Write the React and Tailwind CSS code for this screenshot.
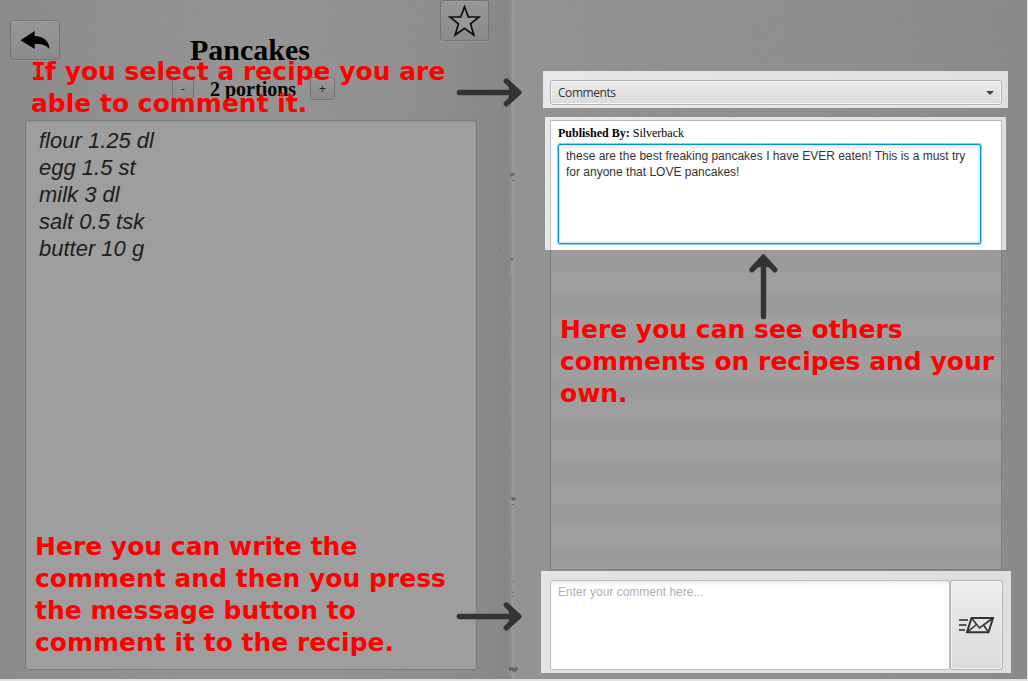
const ingredients = ['flour 1.25 dl', 'egg 1.5 st', 'milk 3 dl', 'salt 0.5 tsk', 'butter 10 g'];

const buttonLook = 'flex items-center justify-center rounded-[3px] border border-[#747474] bg-gradient-to-b from-[#979797] to-[#8b8b8b] shadow-[inset_0_1px_0_#a0a0a0,0_1px_0_#979797]';

const emptyRows = Array.from({ length: 14 }, (_, i) => i);

function Arrow({ className }) {
  return (
    <svg className={className} width="68" height="30" viewBox="0 0 68 30" fill="none">
      <path d="M3.4 15.500H60" stroke="#333" strokeWidth="5.4" strokeLinecap="round" />
      <path d="M50.300 4 62.800 15.400 50.300 26.800" stroke="#333" strokeWidth="5.400" strokeLinecap="round" strokeLinejoin="round" />
      <path d="M52 8.500 66 15.400 52 22.300 54 15.400Z" fill="#333" />
    </svg>
  );
}

function Note({ className, lines, initial }) {
  return (
    <div className={`absolute whitespace-nowrap font-['DejaVu_Sans',sans-serif] text-[25px] font-bold leading-[32px] text-[#ff0000] ${className}`}>
      {lines.map((line, i) => (
        <div key={line} className="h-8">
          {i === 0 && initial && <span className="font-['DejaVu_Sans_Mono',monospace] tracking-[-1px]">{initial}</span>}
          {line}
        </div>
      ))}
    </div>
  );
}

function PaperGrain() {
  return (
    <svg className="absolute inset-0 opacity-[0.04]" width="1027" height="679">
      <filter id="grain">
        <feTurbulence type="fractalNoise" baseFrequency="0.18" numOctaves="3" />
        <feColorMatrix type="saturate" values="0" />
      </filter>
      <rect width="1027" height="679" filter="url(#grain)" />
    </svg>
  );
}

function Spine() {
  return (
    <svg className="absolute left-[494px] top-0" width="40" height="679" viewBox="494 0 40 679" fill="none">
      <path d="M512.5 0V679" stroke="#a0a0a0" strokeWidth="2" opacity=".65" />
      <path d="M510.5 0V679" stroke="#7f7f7f" opacity=".4" />
      <g fill="#555" opacity=".75">
        <path d="M510 175l2-2 3 .5-1 2-3 1zM512 180h2v1h-2z" />
        <path d="M511 258h2v2h-2zM499.500 248h1v1h-1z" />
        <path d="M510.500 498l2-1 3 1v2l-3 1-1-2zM512 504h2v1h-2z" />
        <path d="M512 581h1v1h-1zM511.500 591l2 1-1 2zM512 596h1v1h-1z" />
        <path d="M509 668l3-1 1 1 4-1 1 2-2 3-2-1-1 2-1-3-3 1z" />
      </g>
      <path d="M508.500 177q1 6 6 6M508.500 500q2 4 5 3M511 265l1 4-2 5M508 670q1 5 5 5" stroke="#adadad" opacity=".6" />
    </svg>
  );
}

function RecipePage() {
  return (
    <section className="flex w-[514px] flex-col">
      <div className="flex h-[60px] justify-between pl-[10px] pr-[25px]">
        <button className={`mt-5 h-10 w-[50px] ${buttonLook}`}>
          <svg width="30" height="20" viewBox="0 0 30 20">
            <path d="M0.500 10.300 14.700 1V6C23 6 29.200 11 29.600 19 25.500 14.500 21 13.500 14.700 14V19Z" fill="#000" />
          </svg>
        </button>
        <h1 className="mt-[33px] w-[120px] font-['Liberation_Serif',serif] text-[30px] font-bold leading-[34px] text-black">Pancakes</h1>
        <button className={`h-[41px] w-[49px] ${buttonLook}`}>
          <svg width="33" height="32" viewBox="0 0 33 32">
            <path d="M16.500 1.800 20.300 12H31L22.500 18.800 25.800 30 16.500 23.300 7.200 30 10.500 18.800 2 12H12.700Z" fill="#999" stroke="#0c0c0c" strokeWidth="1.700" />
          </svg>
        </button>
      </div>
      <div className="flex h-[60px] pl-[172px] pt-[17px] font-['Liberation_Serif',serif]">
        <button className={`mt-px h-[22px] w-[22px] font-['Open_Sans',sans-serif] text-[12px] text-[#222] ${buttonLook}`}>-</button>
        <span className="ml-4 w-[100px] whitespace-nowrap text-[20px] font-bold leading-[24px] text-black">2 portions</span>
        <button className={`h-[23px] w-[25px] font-['Open_Sans',sans-serif] text-[12px] text-[#222] ${buttonLook}`}>+</button>
      </div>
      <ul className="ml-[25px] h-[550px] w-[452px] rounded-[2px] border border-[#7c7c7c] bg-[#9e9e9e] pl-[13px] pt-[6px] font-['Liberation_Sans',sans-serif] text-[22px] italic leading-[27px] text-[#1d1d1d] shadow-[inset_0_2px_2px_#979797]">
        {ingredients.map((item) => (
          <li key={item}>{item}</li>
        ))}
      </ul>
    </section>
  );
}

function CommentsPage() {
  return (
    <section className="flex w-[513px] flex-col">
      <div className="ml-[29px] mt-[71px] h-[37px] w-[465px] bg-gradient-to-r from-[#e8e8e8] to-[#dfdfdf] pl-[7px] pt-[9px]">
        <div className="flex h-[25px] w-[452px] items-center justify-between rounded-[3px] border border-[#b2b2b2] bg-gradient-to-b from-[#eeeeee] to-[#dadada] pl-[7px] pr-[7px] font-['Open_Sans',sans-serif] text-[12px] text-[#333] shadow-[inset_0_0_0_1px_#f5f5f5,0_1px_0_#eeeeee]">
          <span className="tracking-[-0.45px]">Comments</span>
          <svg width="8" height="4" viewBox="0 0 8 4"><path d="M0 0H8L4 4Z" fill="#444" /></svg>
        </div>
      </div>
      <div className="ml-[31px] mt-[9px] h-[133px] w-[461px] bg-gradient-to-r from-[#e8e8e8] to-[#dfdfdf] pl-[5px] pt-[3px]">
        <div className="h-[130px] w-[452px] border border-b-0 border-[#bbb] bg-white pl-[7px] pt-[4px]">
          <p className="font-['Liberation_Serif',serif] text-[12px] leading-[16px] text-black"><b>Published By:</b> Silverback</p>
          <div className="mt-[3px] h-[100px] w-[423px] whitespace-nowrap rounded-[2px] border border-[#0093d4] bg-white pl-[7px] pt-[3px] font-['Liberation_Sans',sans-serif] text-[12px] leading-[16px] text-[#333] shadow-[0_0_0_1px_#8fd0ec,inset_0_3px_3px_#efeff3,inset_-2px_-2px_0_#dff0f8]">
            these are the best freaking pancakes I have EVER eaten! This is a must try
            <br />
            for anyone that LOVE pancakes!
          </div>
        </div>
      </div>
      <div className="ml-[36px] flex h-[320px] w-[452px] flex-col border border-t-0 border-[#7c7c7c] bg-[#9f9f9f]">
        <div className="h-[23px] bg-[#9b9b9b]" />
        {emptyRows.map((row) => (
          <div key={row} className="h-[21px] odd:bg-[#9b9b9b] even:bg-[#9f9f9f]" />
        ))}
      </div>
      <div className="ml-[27px] mt-px flex h-[102px] w-[470px] bg-gradient-to-r from-[#e4e4e4] to-[#dfdfdf] pl-[9px] pt-[9px]">
        <div className="h-[90px] w-[400px] rounded-[2px] border border-[#bdbdbd] bg-white pl-[7px] pt-[3px] font-['Liberation_Sans',sans-serif] text-[12px] leading-[16px] text-[#b0b0b0] shadow-[inset_0_3px_3px_#f0f0f0]">
          Enter your comment here...
        </div>
        <button className="flex h-[90px] w-[53px] items-center justify-center rounded-[3px] border border-[#b2b2b2] bg-gradient-to-b from-[#eeeeee] to-[#dadada] shadow-[inset_0_0_0_1px_#f4f4f4]">
          <svg width="37" height="18" viewBox="0 0 37 18" fill="none" stroke="#333">
            <path d="M1 4H10M1 9H8.500M1 14H7" stroke="#555" strokeWidth="1.900" />
            <path d="M13.500 2H35L30.500 16.300H9Z" strokeWidth="2" />
            <path d="M13.500 2 21.500 12 35 2M9 16.300 18.500 8.500M30.500 16.300 25.500 9" strokeWidth="1.600" />
          </svg>
        </button>
      </div>
    </section>
  );
}

export default function App() {
  return (
    <main className="h-[681px] w-[1028px] overflow-hidden bg-[#e0e0e0]">
      <div className="relative flex h-[679px] w-[1027px] overflow-hidden bg-[linear-gradient(to_right,#8a8a8a_0,#8f8f8f_100px,#939393_260px,#8e8e8e_440px,#868686_508px,#939393_514px,#909090_620px,#8e8e8e_850px,#898989_1027px)]">
        <PaperGrain />
        <Spine />
        <div className="relative flex">
          <RecipePage />
          <CommentsPage />
        </div>
        <Arrow className="absolute left-[456px] top-[77px]" />
        <Arrow className="absolute left-[456px] top-[601px]" />
        <Arrow className="absolute left-[729px] top-[271px] -rotate-90" />
        <Note className="left-[31px] top-[56px]" initial="I" lines={['f you select a recipe you are', 'able to comment it.']} />
        <Note className="left-[35px] top-[531px]" lines={['Here you can write the', 'comment and then you press', 'the message button to', 'comment it to the recipe.']} />
        <Note className="left-[560px] top-[314px]" lines={['Here you can see others', 'comments on recipes and your', 'own.']} />
      </div>
    </main>
  );
}
